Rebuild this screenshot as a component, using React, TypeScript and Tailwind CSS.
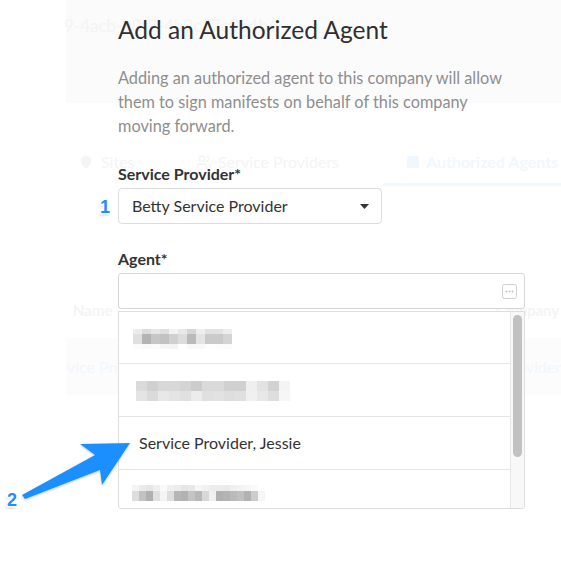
import { MapPin, Users } from 'lucide-react';

const font = { fontFamily: 'Lato, "Noto Sans", sans-serif' };

/**
 * Pixelated (redacted) name inside a dropdown row
 */
function Mosaic({ rows, block }: { rows: { h: number; shades: string[] }[]; block: number }) {
  const width = Math.max(...rows.map((r) => r.shades.length)) * block;
  const height = rows.reduce((sum, r) => sum + r.h, 0);
  let y = 0;
  return (
    <svg width={width} height={height} className="block">
      {rows.map((row, ri) => {
        const top = y;
        y += row.h;
        return row.shades.map((c, ci) => (
          <rect key={`${ri}-${ci}`} x={ci * block} y={top} width={block} height={row.h} fill={c} />
        ));
      })}
    </svg>
  );
}

const mosaicOne = [
  { h: 5, shades: ['#ececec', '#dcdcdc', '#e6e6e6', '#dedede', '#f2f2f2', '#e8e8e8', '#d6d6d6', '#eeeeee', '#e2e2e2', '#e2e2e2', '#ededed'] },
  { h: 10, shades: ['#e0e0e0', '#b4b4b4', '#c6c6c6', '#c2c2c2', '#d0d0d0', '#dcdcdc', '#bababa', '#e4e4e4', '#cacaca', '#cacaca', '#d4d4d4'] },
  { h: 5, shades: ['#fbfbfb', '#f9f9f9', '#fbfbfb', '#f6f6f6', '#f3f3f3', '#ffffff', '#f8f8f8', '#f8f8f8', '#fdfdfd', '#fcfcfc', '#fbfbfb'] },
];

const mosaicTwo = [
  { h: 10, shades: ['#dadada', '#d0d0d0', '#d8d8d8', '#d8d8d8', '#d4d4d4', '#cccccc', '#dadada', '#dadada', '#d0d0d0', '#d0d0d0', '#efefef', '#e2e2e2', '#d2d2d2', '#f4f4f4'] },
  { h: 10, shades: ['#e4e4e4', '#dadada', '#e8e8e8', '#e4e4e4', '#e0e0e0', '#ececec', '#e0e0e0', '#e2e2e2', '#dedede', '#e0e0e0', '#f0f0f0', '#e8e8e8', '#dedede', '#f6f6f6'] },
];

const mosaicFour = [
  { h: 6, shades: ['#f4f4f4', '#eaeaea', '#e6e6e6', '#f0f0f0', '#fafafa', '#f0f0f0', '#ececec', '#e6e6e6', '#e8e8e8', '#f6f6f6', '#f2f2f2', '#ececec', '#ececec', '#eaeaea', '#f0f0f0', '#f2f2f2', '#f6f6f6', '#fafafa', '#ffffff'] },
  { h: 10, shades: ['#dddddd', '#c2c2c2', '#b0b0b0', '#e0e0e0', '#f4f4f4', '#dedede', '#b6b6b6', '#b2b2b2', '#c4c4c4', '#b8b8b8', '#d8d8d8', '#f0f0f0', '#b0b0b0', '#b4b4b4', '#bababa', '#c0c0c0', '#b2b2b2', '#cccccc', '#f6f6f6'] },
];

/**
 * Faded company page behind the modal
 */
function BackgroundPage() {
  return (
    <div className="pl-[66px]">
      {/* Header panel */}
      <div className="h-[103px] bg-[#fbfbfb] pt-[15px]">
        <div className="-ml-[2px] text-[17px] leading-[22px] text-[#f4f4f4]">9-4acb-b0f2-4b9c27c0b4b6</div>
      </div>

      {/* Tabs */}
      <div className="mt-[47px] flex h-[36px] items-start">
        <div className="flex w-[130px] items-center gap-[8px] pl-[13px] pt-[1px] text-[16px] leading-[22px] text-[#f4f4f4]">
          <MapPin size={14} className="fill-[#f4f4f4]" />
          <span>Sites</span>
        </div>
        <div className="flex w-[187px] items-center gap-[6px] pt-[1px] text-[16px] leading-[22px] text-[#f4f4f4]">
          <Users size={16} />
          <span>Service Providers</span>
        </div>
        <div className="flex h-[36px] flex-1 flex-col">
          <div className="flex items-center gap-[7px] pl-[24px] pt-[1px] text-[16px] font-bold leading-[22px] text-[#f0f7fe]">
            <span className="h-[12px] w-[12px] rounded-[2px] bg-[#f0f7fe]" />
            <span className="whitespace-nowrap">Authorized Agents</span>
          </div>
          <div className="mt-auto h-[3px] bg-[#f2f9fe]" />
        </div>
      </div>

      {/* Table header */}
      <div className="mt-[114px] flex h-[20px] items-center text-[15px] font-bold text-[#f4f4f4]">
        <span className="w-[430px] pl-[7px]">Name</span>
        <span>Company</span>
      </div>

      {/* Table row */}
      <div className="mt-[18px] flex h-[57px] items-center overflow-hidden bg-[#fcfcfc] text-[16px] text-[#f0f7fe]">
        <span className="-ml-[22px] w-[453px] whitespace-nowrap">Service Provider</span>
        <span className="whitespace-nowrap">Betty Service Provider</span>
      </div>
    </div>
  );
}

function Caret() {
  return (
    <svg width="9" height="5" viewBox="0 0 9 5">
      <path d="M0 0h9L4.5 5z" fill="#333" />
    </svg>
  );
}

function MoreIcon() {
  return (
    <svg width="15" height="15" viewBox="0 0 15 15">
      <rect x="0.5" y="0.5" width="14" height="14" rx="2" fill="none" stroke="#cfcfcf" />
      <circle cx="4.5" cy="7.5" r="0.9" fill="#bdbdbd" />
      <circle cx="7.5" cy="7.5" r="0.9" fill="#bdbdbd" />
      <circle cx="10.5" cy="7.5" r="0.9" fill="#bdbdbd" />
    </svg>
  );
}

/**
 * Add agent modal content
 */
function AgentModal() {
  return (
    <div className="absolute inset-0 pl-[118px] pt-[14px]">
      <div className="w-[407px]">
        <h2 className="text-[24.5px] leading-[32px] text-[#2f2f2f]">Add an Authorized Agent</h2>
        <p className="mt-[20px] w-[392px] text-[16.3px] leading-[24px] text-[#8e8e8e]">
          Adding an authorized agent to this company will allow them to sign manifests on behalf of this company moving forward.
        </p>

        <div className="mt-[24px] text-[16px] font-bold leading-[24px] text-[#333]">Service Provider*</div>
        <div className="mt-[2px] flex h-[36px] w-[264px] items-center justify-between rounded-[4px] border border-[#dcdcdc] bg-white pl-[13px] pr-[12px]">
          <span className="text-[16px] text-[#333]">Betty Service Provider</span>
          <Caret />
        </div>

        <div className="mt-[23px] text-[16px] font-bold leading-[24px] text-[#333]">Agent*</div>
        <div className="mt-[2px] flex h-[36px] items-center justify-end rounded-[3px] border border-[#d6d6d6] bg-white pr-[7px]">
          <MoreIcon />
        </div>

        {/* Dropdown options */}
        <div className="mt-[2px] flex h-[198px] overflow-hidden rounded-b-[3px] border border-[#dedede] bg-white">
          <div className="flex-1">
            <div className="flex h-[52px] items-center border-b border-[#e6e6e6] pl-[14px] pt-[2px]">
              <Mosaic rows={mosaicOne} block={9} />
            </div>
            <div className="flex h-[53px] items-center border-b border-[#e6e6e6] pl-[17px] pt-[2px]">
              <Mosaic rows={mosaicTwo} block={11} />
            </div>
            <div className="flex h-[53px] items-center border-b border-[#e6e6e6] pl-[20px] text-[16px] text-[#333]">
              Service Provider, Jessie
            </div>
            <div className="flex h-[53px] items-start pl-[13px] pt-[15px]">
              <Mosaic rows={mosaicFour} block={7} />
            </div>
          </div>
          <div className="w-[14px] border-l border-[#e8e8e8] bg-[#f8f8f8] px-[2px] pt-[3px]">
            <div className="h-[142px] rounded-full bg-[#c1c1c1]" />
          </div>
        </div>
      </div>
    </div>
  );
}

/**
 * Step callouts drawn over the screenshot
 */
function Callouts() {
  const digit = {
    fontFamily: '"Liberation Sans", Arial, sans-serif',
    fontWeight: 700,
    fontSize: 18,
  } as const;
  return (
    <svg className="pointer-events-none absolute inset-0" width="561" height="570">
      <defs>
        <filter id="softBlur">
          <feGaussianBlur stdDeviation="0.8" />
        </filter>
        <filter id="arrowShadow" x="-20%" y="-20%" width="140%" height="140%">
          <feDropShadow dx="0" dy="1" stdDeviation="1" floodColor="#000" floodOpacity="0.25" />
        </filter>
      </defs>
      {/* soft grey shadow copies */}
      <text x="99" y="214.5" style={digit} fill="#777" opacity="0.55" filter="url(#softBlur)">1</text>
      <text x="6" y="507.5" style={digit} fill="#777" opacity="0.55" filter="url(#softBlur)">2</text>
      {/* white outline then blue fill */}
      <text x="100" y="213" style={digit} fill="#fff" stroke="#fff" strokeWidth="3" strokeLinejoin="round">1</text>
      <text x="7" y="506" style={digit} fill="#fff" stroke="#fff" strokeWidth="3" strokeLinejoin="round">2</text>
      <text x="100" y="213" style={digit} fill="#1f8cff">1</text>
      <text x="7" y="506" style={digit} fill="#1f8cff">2</text>
      <polygon
        points="130,443 80,444 95,455 22,495 25,499 100,470 102,485"
        fill="#1f8fff"
        filter="url(#arrowShadow)"
      />
    </svg>
  );
}

export default function App() {
  return (
    <div className="relative h-[570px] w-[561px] overflow-hidden bg-white" style={font}>
      <BackgroundPage />
      <AgentModal />
      <Callouts />
    </div>
  );
}
